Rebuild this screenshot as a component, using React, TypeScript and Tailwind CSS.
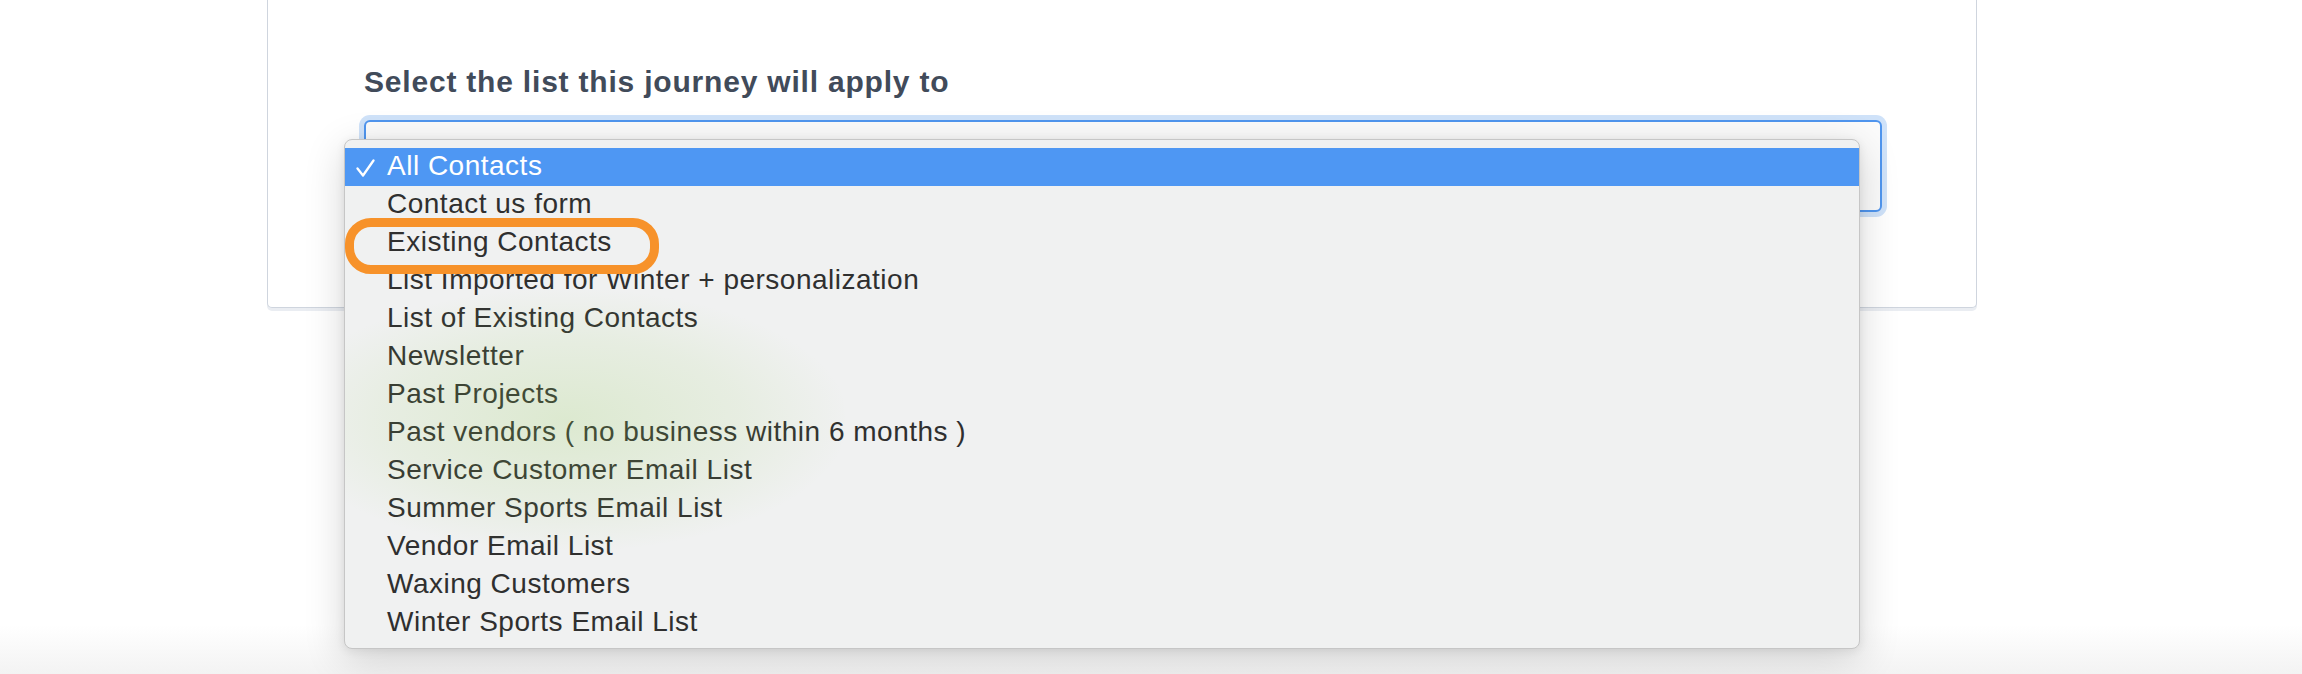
import React from "react";

const items = [
  "All Contacts",
  "Contact us form",
  "Existing Contacts",
  "List Imported for Winter + personalization",
  "List of Existing Contacts",
  "Newsletter",
  "Past Projects",
  "Past vendors ( no business within 6 months )",
  "Service Customer Email List",
  "Summer Sports Email List",
  "Vendor Email List",
  "Waxing Customers",
  "Winter Sports Email List",
];

export default function App() {
  return (
    <div
      className="relative w-full h-[674px] overflow-hidden bg-[linear-gradient(to_bottom,#ffffff_0px,#ffffff_625px,#f3f3f3_674px)]"
      style={{ fontFamily: '"Liberation Sans", Arial, sans-serif' }}
    >
      <div className="ml-[267px] w-[1710px] h-[308px] bg-white border-x border-b border-[#cfd5de] rounded-b-[5px] shadow-[0_3px_0_#eaedf2] pl-[96px] pt-[64px]">
        <h2 className="text-[30px] leading-[36px] font-bold text-[#414b5a] tracking-[0.8px]">
          Select the list this journey will apply to
        </h2>
        <div className="relative mt-[20px] w-[1518px] h-[92px] rounded-[6px] border-2 border-[#4f95ee] ring-[5px] ring-[#cfe2f9] bg-[#fbfbfb]">
          <div className="absolute left-[-22px] top-[17px] w-[1516px] h-[510px] rounded-[8px] border border-[#c6c6c6] bg-[#f0f1f1] shadow-[0_10px_40px_rgba(0,0,0,0.16),0_2px_10px_rgba(0,0,0,0.08)] pt-[8px] pb-[6px] overflow-hidden z-10">
            {items.map((label, i) => (
              <div
                key={label}
                className={
                  i === 0
                    ? "flex h-[38px] items-start bg-[#4e97f3] text-white"
                    : "flex h-[38px] items-start text-[#2f2f2f]"
                }
              >
                <div className="w-[42px] h-[38px] flex items-center justify-end pr-[12px] pt-[2px]">
                  {i === 0 && (
                    <svg width="19" height="18" viewBox="0 0 19 18" fill="none">
                      <path
                        d="M1.5 9.5 L7 16.5 L17.5 1.5"
                        stroke="#ffffff"
                        strokeWidth="2.3"
                        strokeLinecap="round"
                        strokeLinejoin="round"
                      />
                    </svg>
                  )}
                </div>
                <span className="text-[28px] leading-[35px] tracking-[0.5px] whitespace-nowrap">
                  {label}
                </span>
              </div>
            ))}
            <div className="pointer-events-none absolute left-[-60px] top-[150px] w-[560px] h-[260px] rounded-full bg-[radial-gradient(ellipse_at_center,rgba(150,205,90,0.22)_0%,rgba(150,205,90,0.10)_45%,rgba(150,205,90,0)_72%)]" />
            <div className="pointer-events-none absolute left-0 top-[78px] w-[314px] h-[56px] rounded-[26px] border-[9px] border-[#f7922a]" />
          </div>
        </div>
      </div>
    </div>
  );
}
